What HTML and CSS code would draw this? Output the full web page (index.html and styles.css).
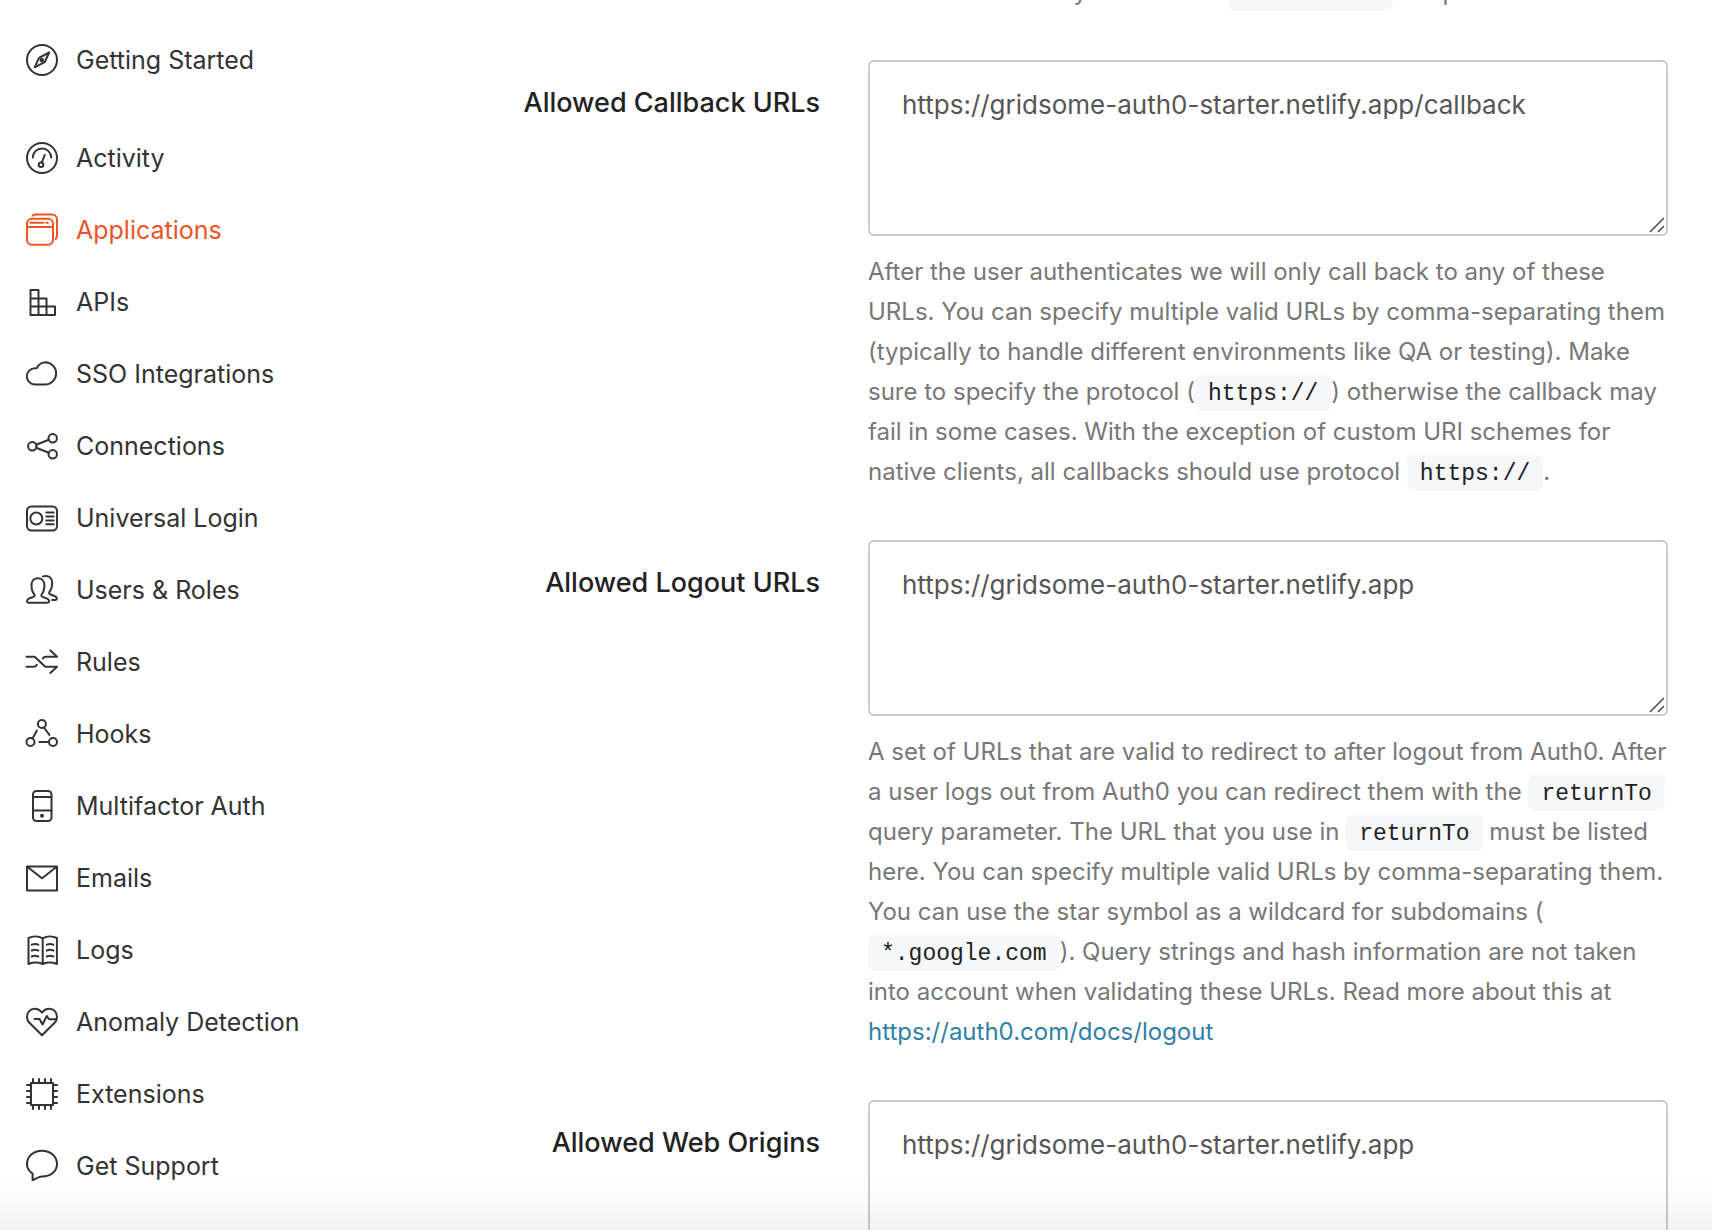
FILE: index.html
```
<!DOCTYPE html>
<html lang="en">
<head>
<meta charset="utf-8">
<meta name="viewport" content="width=device-width, initial-scale=1">
<title>Application Settings</title>
<link rel="stylesheet" href="styles.css">
</head>
<body>
<div class="layout">
  <nav class="sidebar" aria-label="Main">
    <ul class="nav">
      <li class="nav-item nav-item-lead"><a class="nav-link" href="#getting-started">
        <svg class="icon" viewBox="0 0 36 36" aria-hidden="true"><circle cx="18" cy="18" r="15"/><path d="M25.2 10.5 15 15.8 10.6 25.3 20.6 20.2z"/><circle cx="17.8" cy="18" r="1.2"/></svg>
        Getting Started</a></li>
      <li class="nav-item"><a class="nav-link" href="#activity">
        <svg class="icon" viewBox="0 0 36 36" aria-hidden="true"><circle cx="18" cy="18" r="15"/><path d="M8.8 17.6a9.2 9.2 0 0 1 18.4 0M20.7 15l-2.8 7.4"/><circle cx="17" cy="24.7" r="2.3"/></svg>
        Activity</a></li>
      <li class="nav-item"><a class="nav-link nav-link-active" href="#applications" aria-current="page">
        <svg class="icon" viewBox="0 0 36 36" aria-hidden="true"><rect x="3" y="6.8" width="26" height="26" rx="5"/><path d="M3 15h26M6.3 10.8h13.2M22.2 10.8h1.6M8.6 3.7C9.6 2.8 10.8 2.5 12.2 2.5H28a5 5 0 0 1 5 5V23.5c0 1.6-.4 2.6-1.4 3.6"/></svg>
        Applications</a></li>
      <li class="nav-item"><a class="nav-link" href="#apis">
        <svg class="icon" viewBox="0 0 36 36" aria-hidden="true"><path d="M6.5 6h8v25h-8zM6.5 14.5h16V31M6.5 22.5h24.5V31H6.5"/></svg>
        APIs</a></li>
      <li class="nav-item"><a class="nav-link" href="#sso">
        <svg class="icon" viewBox="0 0 36 36" aria-hidden="true"><path d="M11 28.5H22A11.2 11.2 0 0 0 22 6.2c-4 0-7.4 2.2-9.3 6H11a8.15 8.15 0 0 0 0 16.3z"/></svg>
        SSO Integrations</a></li>
      <li class="nav-item"><a class="nav-link" href="#connections">
        <svg class="icon" viewBox="0 0 36 36" aria-hidden="true"><circle cx="8.3" cy="18.3" r="4.2"/><circle cx="28.7" cy="10.3" r="4.2"/><circle cx="28.7" cy="26.3" r="4.2"/><path d="M12.2 16.8l12.6-5M12.2 19.8l12.6 5"/></svg>
        Connections</a></li>
      <li class="nav-item"><a class="nav-link" href="#universal-login">
        <svg class="icon" viewBox="0 0 36 36" aria-hidden="true"><rect x="3" y="6.5" width="30" height="24" rx="4.5"/><circle cx="12.3" cy="18.5" r="6"/><path d="M22.3 12.6h7.4M22.3 16.5h7.4M22.3 20.4h7.4M22.3 24.3h7.4"/></svg>
        Universal Login</a></li>
      <li class="nav-item"><a class="nav-link" href="#users">
        <svg class="icon" viewBox="0 0 36 36" aria-hidden="true"><path d="M13.8 6.2c-3.9 0-6.3 2.8-6.3 6.8 0 4.2.8 7.3 3 9.6.6 1.4-.4 2.3-2.6 2.9C4.6 26.4 3 27 3 29.3c0 .9.500 1.400 1.400 1.400h19.300c.9 0 1.400-.5 1.400-1.400 0-2.300-1.700-2.900-5-3.800-2.200-.6-3.200-1.500-2.600-2.900 2.200-2.300 2.900-5.400 2.900-9.600 0-4-2.700-6.800-6.600-6.800z"/><path d="M18.800 4.500c.7-.4 1.700-.6 2.800-.6 4 0 6.600 2.700 6.600 6.700 0 4.300-.9 7.200-3 9.500-.6 1.400.4 2.200 2.700 2.900 3.100.9 5 1.600 5 3.800 0 .9-.5 1.100-1.400 1.100h-3.400"/></svg>
        Users &amp; Roles</a></li>
      <li class="nav-item"><a class="nav-link" href="#rules">
        <svg class="icon" viewBox="0 0 36 36" aria-hidden="true"><path d="M2.500 12.700h8.200l10.600 10H33l-6.700 6.200M2.500 22.700h7.300c1.300 0 2-.6 3-1.900M18.800 14.500c.8-1.200 1.500-1.800 2.900-1.800H33l-6.700-6.400"/></svg>
        Rules</a></li>
      <li class="nav-item"><a class="nav-link" href="#hooks">
        <svg class="icon" viewBox="0 0 36 36" aria-hidden="true"><circle cx="17.900" cy="8" r="4"/><circle cx="6.500" cy="26" r="4"/><circle cx="29" cy="26" r="4"/><path d="M8.700 22.300l4.200-7.800M19.900 11.500l5.500 7.400M15.300 26H25"/></svg>
        Hooks</a></li>
      <li class="nav-item"><a class="nav-link" href="#mfa">
        <svg class="icon" viewBox="0 0 36 36" aria-hidden="true"><rect x="9" y="3" width="18.500" height="30" rx="3.500"/><path d="M9 9h18.500M9 22.500h18.500"/><circle class="icon-dot" cx="18" cy="27.700" r="2"/></svg>
        Multifactor Auth</a></li>
      <li class="nav-item"><a class="nav-link" href="#emails">
        <svg class="icon" viewBox="0 0 36 36" aria-hidden="true"><path d="M3 6.500h30v24H3zM3.500 7 18 18.300 32.500 7"/></svg>
        Emails</a></li>
      <li class="nav-item"><a class="nav-link" href="#logs">
        <svg class="icon" viewBox="0 0 36 36" aria-hidden="true"><path d="M18.700 6.300C14.500 4 8.500 4 4.500 6v26c4-1.600 10-1.600 14.200 0 4.200-1.600 10.200-1.600 14.200 0V6c-4-2-10-2-14.200.3zV32M7.800 12.700c2-1 4.500-1 6.500 0M7.800 18.500c2-1 4.500-1 6.500 0M7.800 24.500c2-1 4.500-1 6.500 0M22.800 12.700c2-1 4.500-1 6.500 0M22.800 18.500c2-1 4.500-1 6.500 0M22.800 24.500c2-1 4.500-1 6.500 0"/></svg>
        Logs</a></li>
      <li class="nav-item"><a class="nav-link" href="#anomaly">
        <svg class="icon" viewBox="0 0 36 36" aria-hidden="true"><path d="M18 31.200 5.600 19C3.800 17.200 3 15.200 3 12.900 3 8.300 6.200 4.800 10.600 4.800c3 0 5.600 1.400 7.400 4 1.800-2.600 4.400-4 7.400-4 4.400 0 7.600 3.500 7.600 8.100 0 2.300-.8 4.300-2.600 6.100z"/><path d="M10.500 15h5l3 5.500 4.300-8.500 2.200 3.200h7.200"/></svg>
        Anomaly Detection</a></li>
      <li class="nav-item"><a class="nav-link" href="#extensions">
        <svg class="icon" viewBox="0 0 36 36" aria-hidden="true"><path d="M7 7h22v22H7zM9 3v4M15 3v4M21 3v4M27 3v4M9 29v4M15 29v4M21 29v4M27 29v4M3 9h4M3 15h4M3 21h4M3 27h4M29 9h4M29 15h4M29 21h4M29 27h4"/></svg>
        Extensions</a></li>
      <li class="nav-item"><a class="nav-link" href="#support">
        <svg class="icon" viewBox="0 0 36 36" aria-hidden="true"><path d="M8.600 25.600C5 23.200 3 19.800 3 15.900 3 8.500 9.500 2.800 18 2.800s15 5.700 15 13.100-6.500 12.600-15 12.600c-3.400 0-6.300 2.200-9.400 3.700z"/></svg>
        Get Support</a></li>
    </ul>
  </nav>
  <main class="content">
    <form class="settings">
      <div class="field">
        <p class="help help-first">should redirect to your tenant's <code>/authorize</code> endpoint. <a class="link link-light" href="#learn-more">Learn more</a></p>
      </div>
      <div class="field">
        <label class="label" for="callbacks">Allowed Callback URLs</label>
        <div class="control">
          <div class="box">
            <textarea class="input" id="callbacks" spellcheck="false">https://gridsome-auth0-starter.netlify.app/callback</textarea>
            <svg class="grip" viewBox="0 0 16 16" aria-hidden="true"><path d="M1 15 15 1M9 15l6-6"/></svg>
          </div>
          <p class="help">After the user authenticates we will only call back to any of these URLs. You can specify multiple valid URLs by comma-separating them (typically to handle different environments like QA or testing). Make sure to specify the protocol (<code>https://</code>) otherwise the callback may fail in some cases. With the exception of custom URI schemes for native clients, all callbacks should use protocol <code>https://</code>.</p>
        </div>
      </div>
      <div class="field">
        <label class="label" for="logouts">Allowed Logout URLs</label>
        <div class="control">
          <div class="box">
            <textarea class="input" id="logouts" spellcheck="false">https://gridsome-auth0-starter.netlify.app</textarea>
            <svg class="grip" viewBox="0 0 16 16" aria-hidden="true"><path d="M1 15 15 1M9 15l6-6"/></svg>
          </div>
          <p class="help">A set of URLs that are valid to redirect to after logout from Auth0. After a user logs out from Auth0 you can redirect them with the <code>returnTo</code> query parameter. The URL that you use in <code>returnTo</code> must be listed here. You can specify multiple valid URLs by comma-separating them. You can use the star symbol as a wildcard for subdomains (<wbr><code>*.google.com</code>). Query strings and hash information are not taken into account when validating these URLs. Read more about this at <a class="link" href="https://auth0.com/docs/logout">https://auth0.com/docs/logout</a></p>
        </div>
      </div>
      <div class="field">
        <label class="label" for="origins">Allowed Web Origins</label>
        <div class="control">
          <div class="box">
            <textarea class="input" id="origins" spellcheck="false">https://gridsome-auth0-starter.netlify.app</textarea>
          </div>
        </div>
      </div>
    </form>
  </main>
</div>
<div class="fade"></div>
</body>
</html>
```
FILE: styles.css
```
* { box-sizing: border-box; }

html, body { height: 100%; }

body {
  margin: 0;
  overflow: hidden;
  background: #fff;
  color: #333;
  font-family: Inter, "Liberation Sans", sans-serif;
  font-size: 24px;
  line-height: 40px;
}

.layout {
  display: flex;
  align-items: flex-start;
}

.sidebar {
  flex: none;
  width: 360px;
  padding-top: 24px;
}

.nav {
  margin: 0;
  padding: 0;
  list-style: none;
}

.nav-item-lead { margin-bottom: 26px; }

.nav-link {
  display: flex;
  align-items: center;
  gap: 16px;
  height: 72px;
  padding-left: 24px;
  color: #333;
  font-size: 25px;
  text-decoration: none;
}

.nav-link-active { color: #eb5424; }

.icon {
  flex: none;
  width: 36px;
  height: 36px;
  fill: none;
  stroke: currentColor;
  stroke-width: 2;
  stroke-linecap: round;
  stroke-linejoin: round;
}

.icon-dot {
  fill: currentColor;
  stroke: none;
}

.content {
  flex: 1;
  min-width: 0;
  padding-right: 44px;
}

/* The form is scrolled part of a line past the top edge. */
.settings { margin-top: -28px; }

.field {
  display: grid;
  grid-template-columns: minmax(0, 460fr) minmax(0, 800fr);
  column-gap: 48px;
  margin-bottom: 48px;
}

.label {
  padding-top: 23px;
  color: #222;
  font-size: 27px;
  font-weight: 500;
  text-align: right;
}

.box { position: relative; }

.input {
  display: block;
  width: 100%;
  height: 176px;
  padding: 23px 32px;
  border: 2px solid #ccc;
  border-radius: 6px;
  background: #fff;
  color: #555;
  font: inherit;
  font-size: 26px;
  resize: none;
}

.grip {
  position: absolute;
  right: 3px;
  bottom: 3px;
  width: 16px;
  height: 16px;
  fill: none;
  stroke: #444;
  stroke-width: 1.5;
}

.help {
  margin: 16px 0 0;
  color: #777;
}

.help-first {
  grid-column: 2;
  margin-top: 0;
}

.help code {
  padding: 6px 13px 4px;
  border-radius: 6px;
  background: #f5f7f9;
  color: #222;
  font-family: "Liberation Mono", monospace;
  font-size: 23px;
  line-height: 1;
}

.link {
  color: #2f80a8;
  text-decoration: none;
}

.link-light { color: #44a8e8; }

.fade {
  position: fixed;
  inset: auto 0 0;
  height: 60px;
  background: linear-gradient(to bottom, rgba(0, 0, 0, 0), rgba(0, 0, 0, .015) 50%, rgba(0, 0, 0, .05));
  pointer-events: none;
}
```
